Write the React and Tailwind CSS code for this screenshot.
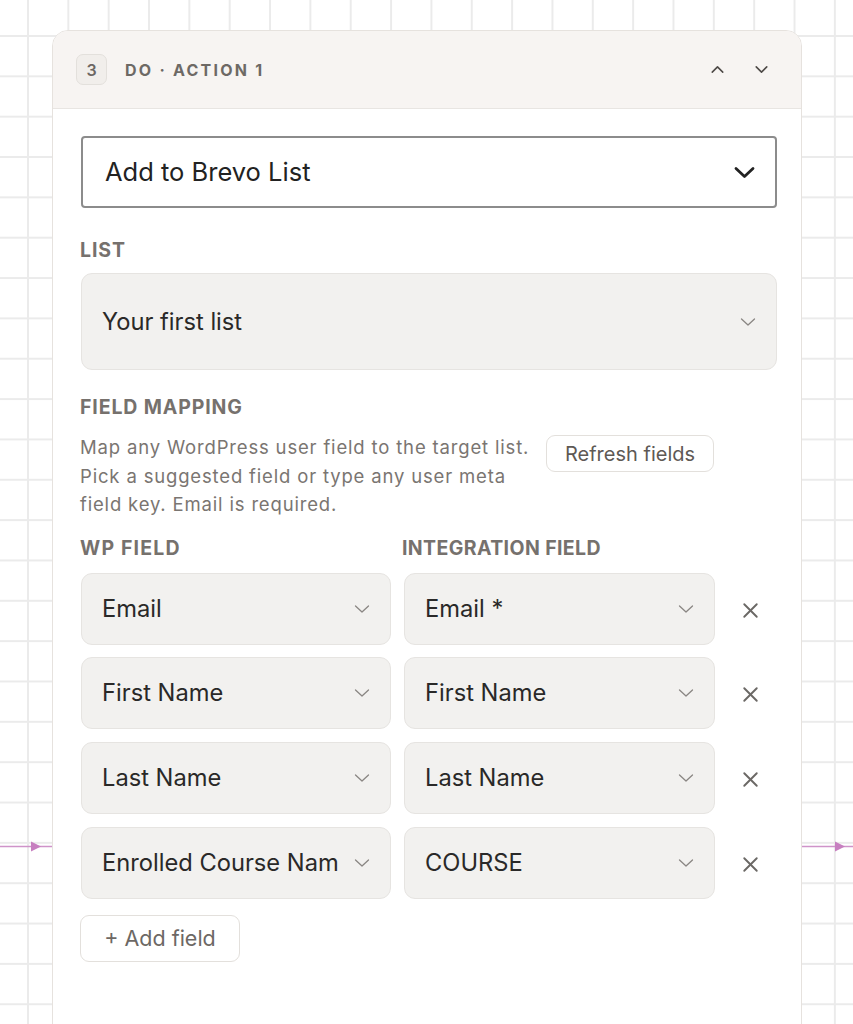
import { ChevronDown, ChevronUp, X } from "lucide-react";

const rows = [
  { wp: "Email", target: "Email *" },
  { wp: "First Name", target: "First Name" },
  { wp: "Last Name", target: "Last Name" },
  { wp: "Enrolled Course Nam", target: "COURSE" },
];

function Connector({ side }) {
  // edge coming into / leaving the node, drawn on the canvas
  const left = side === "left";
  return (
    <svg
      className={`absolute top-[838px] ${left ? "left-0" : "left-[802px]"}`}
      width={left ? 52 : 51}
      height="16"
      viewBox={left ? "0 0 52 16" : "0 0 51 16"}
    >
      <line x1="0" y1="8.5" x2={left ? 52 : 51} y2="8.5" stroke="#cf93c9" strokeWidth="1.5" />
      <path d={left ? "M31 3.5 L41 8.5 L31 13.5 Z" : "M33 3.5 L43 8.5 L33 13.5 Z"} fill="#c77fc0" />
    </svg>
  );
}

function SmallChevron() {
  return (
    <svg width="16" height="10" viewBox="0 0 16 10" className="shrink-0">
      <path d="M1.5 2 L8 8 L14.5 2" fill="none" stroke="#8a8683" strokeWidth="1.3" strokeLinecap="round" strokeLinejoin="round" />
    </svg>
  );
}

function FieldSelect({ value }) {
  return (
    <div className="h-[72px] flex items-center justify-between pl-[20px] pr-[20px] bg-[#f2f1ef] border-[1.5px] border-[#e6e4e1] rounded-[11px]">
      <span className="text-[23.7px] text-[#2a2928] whitespace-nowrap overflow-hidden">{value}</span>
      <SmallChevron />
    </div>
  );
}

function Label({ children, className = "" }) {
  return (
    <div className={`text-[19.5px] leading-[24px] font-bold text-[#76716d] uppercase ${className}`}>
      {children}
    </div>
  );
}

export default function App() {
  return (
    <div
      className="relative h-[1024px] w-full overflow-hidden bg-white bg-[linear-gradient(to_right,#ebebeb_2px,transparent_2px),linear-gradient(to_bottom,#ebebeb_2px,transparent_2px)] bg-[size:40.35px_40.35px] bg-[position:27px_35px]"
      style={{ fontFamily: "Inter, 'Noto Sans', sans-serif" }}
    >
      <Connector side="left" />
      <Connector side="right" />

      <div className="relative ml-[52px] mt-[30px] w-[750px] min-h-[1020px] bg-white border-[1.5px] border-[#e6e2de] rounded-t-[16px] overflow-hidden">
        {/* header */}
        <div className="h-[78px] flex items-center pl-[23px] pr-[24px] bg-[#f7f4f2] border-b-[1.5px] border-[#e8e5e2]">
          <div className="w-[31px] h-[31px] flex items-center justify-center rounded-[7px] border-[1.5px] border-[#e3e0dc] bg-[#f1eeeb] text-[16px] font-semibold text-[#6c6763]">
            3
          </div>
          <div className="ml-[18px] text-[16px] font-bold tracking-[0.14em] text-[#6d6965]">DO · ACTION 1</div>
          <div className="ml-auto flex items-center gap-3">
            <button className="w-8 h-8 flex items-center justify-center text-[#4f4b48]">
              <ChevronUp size={21} strokeWidth={1.8} />
            </button>
            <button className="w-8 h-8 flex items-center justify-center text-[#4f4b48]">
              <ChevronDown size={21} strokeWidth={1.8} />
            </button>
          </div>
        </div>

        {/* body */}
        <div className="pl-[27px] pr-[24px] pt-[27px] pb-10">
          <div className="ml-px h-[72px] flex items-center justify-between pl-[22px] pr-[20px] border-2 border-[#8c8c8c] rounded-[4px]">
            <span className="text-[25.5px] text-[#222]">Add to Brevo List</span>
            <svg width="21" height="13" viewBox="0 0 21 13">
              <path d="M2 2.5 L10.5 10.5 L19 2.5" fill="none" stroke="#222" strokeWidth="2.8" strokeLinecap="round" strokeLinejoin="round" />
            </svg>
          </div>

          <Label className="mt-[30px] tracking-[0.045em]">List</Label>
          <div className="ml-px mt-[11px] h-[97px] flex items-center justify-between pl-[20px] pr-[20px] bg-[#f2f1ef] border-[1.5px] border-[#e6e4e1] rounded-[11px]">
            <span className="text-[23.7px] text-[#2a2928]">Your first list</span>
            <SmallChevron />
          </div>

          <Label className="mt-[25px] tracking-[0.045em]">Field mapping</Label>
          <div className="mt-[14px] flex items-start gap-[14px]">
            <p className="w-[452px] text-[18.5px] leading-[28.5px] tracking-[0.045em] text-[#7a7571]">
              Map any WordPress user field to the target list.
              <br />
              Pick a suggested field or type any user meta
              <br />
              field key. Email is required.
            </p>
            <button className="mt-[2px] h-[37px] w-[168px] flex items-center justify-center rounded-[9px] border-[1.5px] border-[#e3e0dc] text-[20px] text-[#5e5955] bg-white">
              Refresh fields
            </button>
          </div>

          <div className="mt-[17px] grid grid-cols-[311px_311px_1fr] gap-x-[13px]">
            <Label className="tracking-[0.06em]">WP field</Label>
            <Label className="-ml-[2px] tracking-[0.02em]">Integration field</Label>
            <div />
          </div>

          <div className="mt-[13px] flex flex-col gap-[12.7px]">
            {rows.map((r) => (
              <div key={r.wp} className="ml-px grid grid-cols-[310px_311px_1fr] gap-x-[13px] items-center">
                <FieldSelect value={r.wp} />
                <FieldSelect value={r.target} />
                <div className="flex justify-center pr-[4px] pt-[3px]">
                  <X size={25} strokeWidth={1.8} className="text-[#6b6865]" />
                </div>
              </div>
            ))}
          </div>

          <button className="mt-[16px] h-[47px] w-[160px] flex items-center justify-center rounded-[9px] border-[1.5px] border-[#e3e0dc] text-[21.5px] text-[#6d6864] bg-white">
            + Add field
          </button>
        </div>
      </div>
    </div>
  );
}
